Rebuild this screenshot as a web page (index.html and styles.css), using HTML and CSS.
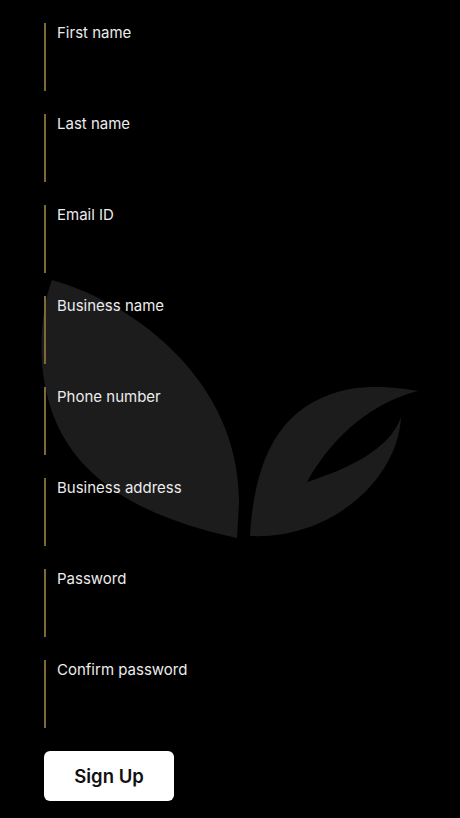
FILE: index.html
```html
<!DOCTYPE html>
<html lang="en">
<head>
<meta charset="utf-8">
<title>Sign Up</title>
<link rel="stylesheet" href="styles.css">
</head>
<body>
<svg class="leaf" viewBox="0 0 460 818" aria-hidden="true">
  <path d="M52 280C140 305 240 385 239 503L237 538C130 515 60 470 45 385C38 350 42 305 52 280Z"/>
  <path d="M250 536C255 450 285 402 350 389C375 385 400 388 418 391C375 402 335 432 307 482C345 470 390 450 401 417C398 480 330 540 250 536Z"/>
</svg>
<form class="form">
  <div class="field"><span class="label">First name</span></div>
  <div class="field"><span class="label">Last name</span></div>
  <div class="field"><span class="label">Email ID</span></div>
  <div class="field"><span class="label">Business name</span></div>
  <div class="field"><span class="label">Phone number</span></div>
  <div class="field"><span class="label">Business address</span></div>
  <div class="field"><span class="label">Password</span></div>
  <div class="field"><span class="label">Confirm password</span></div>
  <button class="submit" type="button">Sign Up</button>
</form>
</body>
</html>
```
FILE: styles.css
```css
html, body {
  margin: 0;
  padding: 0;
  background: #000;
}
body {
  position: relative;
  width: 460px;
  height: 818px;
  overflow: hidden;
  font-family: Inter, "Liberation Sans", sans-serif;
}
.leaf {
  position: absolute;
  left: 0;
  top: 0;
  width: 460px;
  height: 818px;
  fill: #1c1c1c;
}
.form {
  position: relative;
  display: flex;
  flex-direction: column;
  gap: 23px;
  padding: 23px 0 0 44px;
}
.field {
  height: 68px;
  box-sizing: border-box;
  border-left: 2px solid #7d6836;
  padding-left: 11px;
}
.label {
  display: block;
  color: #ececec;
  font-size: 15px;
  font-weight: 400;
  line-height: 20px;
}
.submit {
  width: 130px;
  height: 50px;
  border: 0;
  border-radius: 6px;
  background: #fff;
  color: #111;
  font-family: inherit;
  font-size: 18.5px;
  font-weight: 600;
}
```
